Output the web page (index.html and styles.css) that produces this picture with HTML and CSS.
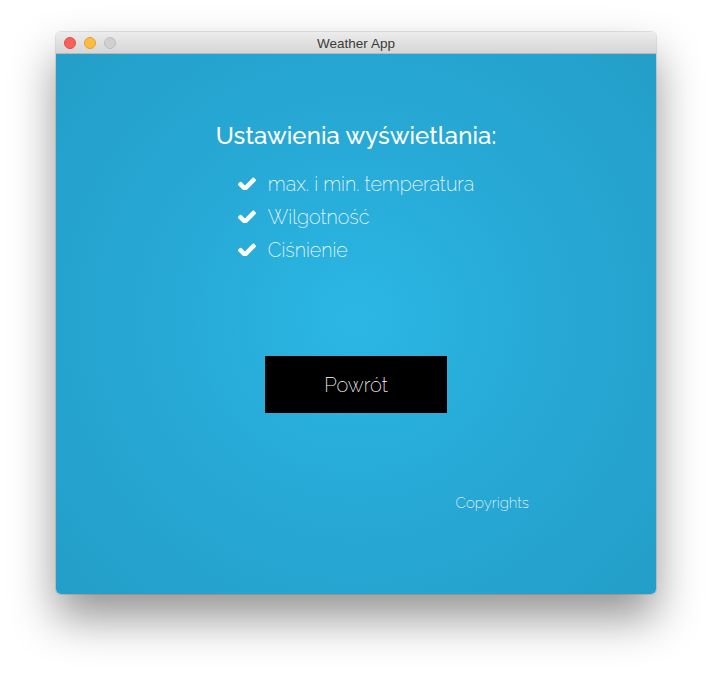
FILE: index.html
```html
<!DOCTYPE html>
<html lang="pl">
<head>
<meta charset="utf-8">
<title>Weather App</title>
<link rel="stylesheet" href="styles.css">
</head>
<body>
<div class="window">
  <div class="titlebar">
    <div class="lights">
      <span class="light red"></span>
      <span class="light yellow"></span>
      <span class="light gray"></span>
    </div>
    <div class="title">Weather App</div>
  </div>
  <div class="content">
    <h1 class="heading">Ustawienia wyświetlania:</h1>
    <ul class="options">
      <li class="option"><svg class="check" viewBox="121 300 1550 1100"><path d="M1671 566q0 40-28 68l-724 724-136 136q-28 28-68 28t-68-28l-136-136-362-362q-28-28-28-68t28-68l136-136q28-28 68-28t68 28l294 295 656-657q28-28 68-28t68 28l136 136q28 28 28 68z"/></svg><span>max. i min. temperatura</span></li>
      <li class="option"><svg class="check" viewBox="121 300 1550 1100"><path d="M1671 566q0 40-28 68l-724 724-136 136q-28 28-68 28t-68-28l-136-136-362-362q-28-28-28-68t28-68l136-136q28-28 68-28t68 28l294 295 656-657q28-28 68-28t68 28l136 136q28 28 28 68z"/></svg><span>Wilgotność</span></li>
      <li class="option"><svg class="check" viewBox="121 300 1550 1100"><path d="M1671 566q0 40-28 68l-724 724-136 136q-28 28-68 28t-68-28l-136-136-362-362q-28-28-28-68t28-68l136-136q28-28 68-28t68 28l294 295 656-657q28-28 68-28t68 28l136 136q28 28 28 68z"/></svg><span>Ciśnienie</span></li>
    </ul>
    <button class="back">Powrót</button>
    <div class="copy">Copyrights</div>
  </div>
</div>
</body>
</html>
```
FILE: styles.css
```css
html, body {
  margin: 0;
  padding: 0;
  background: #ffffff;
}
body {
  padding: 32px 56px 80px;
  font-family: "Raleway", "Lato", "Open Sans", sans-serif;
}
.window {
  width: 600px;
  height: 562px;
  border-radius: 5px;
  overflow: hidden;
  display: flex;
  flex-direction: column;
  box-shadow: 0 24px 45px rgba(0,0,0,0.42), 0 0 0 1px rgba(0,0,0,0.1);
}
.titlebar {
  height: 22px;
  background: linear-gradient(#ececec, #d6d6d6);
  border-bottom: 1px solid #b9b9b9;
  box-sizing: border-box;
  position: relative;
  display: flex;
  align-items: center;
  justify-content: center;
}
.lights {
  position: absolute;
  left: 8px;
  top: 5px;
  display: flex;
  gap: 8px;
}
.light {
  width: 12px;
  height: 12px;
  border-radius: 50%;
  box-sizing: border-box;
}
.red { background: #fc605b; border: 1px solid #de4a44; }
.yellow { background: #fdbc40; border: 1px solid #dea032; }
.gray { background: #d0d0d0; border: 1px solid #bcbcbc; }
.title {
  font-family: "Helvetica Neue", "Liberation Sans", Arial, sans-serif;
  font-size: 13.5px;
  color: #3a3a3a;
  padding-top: 1px;
}
.content {
  flex: 1;
  background: radial-gradient(circle at 50% 49%, #2bb7e4 0%, #27a9d6 45%, #239ec8 100%);
  display: flex;
  flex-direction: column;
  align-items: center;
  padding-top: 68px;
  color: #ffffff;
}
.heading {
  margin: 0;
  font-size: 24px;
  line-height: 28px;
  font-weight: 500;
  letter-spacing: 0.1px;
}
.options {
  list-style: none;
  margin: 17px 0 0 0;
  padding: 0;
}
.option {
  display: flex;
  align-items: center;
  height: 33px;
  font-size: 19.7px;
  font-weight: 200;
  white-space: nowrap;
}
.check {
  width: 18px;
  height: 13px;
  fill: #ffffff;
  margin-right: 12px;
  flex: none;
}
.back {
  margin-top: 90px;
  width: 182px;
  height: 57px;
  background: #000000;
  color: #ffffff;
  border: none;
  font-family: inherit;
  font-size: 20px;
  font-weight: 200;
  padding: 0;
}
.copy {
  margin-top: 80px;
  align-self: flex-end;
  margin-right: 127px;
  font-size: 15px;
  line-height: 20px;
  font-weight: 200;
}
```
